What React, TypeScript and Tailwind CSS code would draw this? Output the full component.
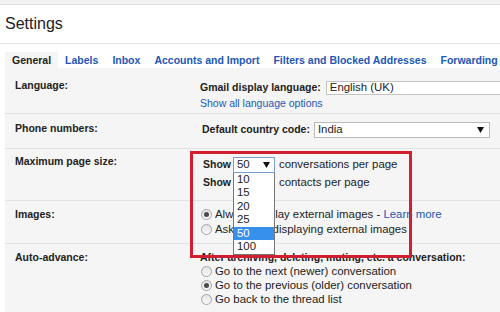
import React from 'react';

const Caret = () => (
  <svg width="7" height="6" viewBox="0 0 7 6" className="shrink-0">
    <polygon points="0,0 7,0 3.5,6" fill="#111" />
  </svg>
);

const Radio = ({ checked = false }: { checked?: boolean }) => (
  <span className="w-[11px] h-[11px] rounded-full border border-[#a5a5a5] bg-gradient-to-b from-[#e4e4e4] to-[#f9f9f9] flex items-center justify-center shrink-0">
    {checked && <span className="w-[5px] h-[5px] rounded-full bg-[#4a4a4a]" />}
  </span>
);

const tabs = ['Labels', 'Inbox', 'Accounts and Import', 'Filters and Blocked Addresses', 'Forwarding'];
const pageSizes = ['10', '15', '20', '25', '50', '100'];

const App: React.FC = () => {
  return (
    <div className="relative w-[500px] h-[312px] overflow-hidden bg-white text-[#222] font-['Liberation_Sans',Arial,sans-serif]">
      <div className="h-[5px] bg-[#f1f1f1] border-b border-[#e3e3e3]" />
      <div className="h-[39px] flex items-center pl-[5px] border-b border-[#e3e3e3]">
        <h1 className="text-[16px] text-[#222]">Settings</h1>
      </div>

      {/* tabs */}
      <div className="flex pl-[5px] pt-[8px] whitespace-nowrap">
        <div className="px-[7px] leading-[16px] text-[10.5px] font-bold bg-[#f5f5f5] text-[#222]">General</div>
        {tabs.map(t => (
          <div key={t} className="px-[7px] leading-[16px] text-[10.5px] font-bold text-[#2257b6]">{t}</div>
        ))}
      </div>

      <div className="ml-[5px] bg-[#f5f5f5] h-[260px]">
        {/* Language */}
        <div className="grid grid-cols-[185px_1fr] pl-[10px] h-[46px] border-b border-[#e2e2e2] pt-[11px]">
          <div className="text-[10.5px] font-bold leading-[13px]">Language:</div>
          <div className="mt-[1px]">
            <div className="flex items-center gap-[5px] whitespace-nowrap">
              <span className="text-[10.5px] font-bold">Gmail display language:</span>
              <div className="h-[14px] w-[200px] bg-white border border-[#c3c3c3] flex items-center pl-[3px] text-[11.4px]">English (UK)</div>
            </div>
            <div className="text-[10.5px] leading-[13px] mt-[1px] text-[#2257b6]">Show all language options</div>
          </div>
        </div>

        {/* Phone numbers */}
        <div className="grid grid-cols-[185px_1fr] pl-[10px] h-[35px] border-b border-[#e2e2e2] pt-[8px]">
          <div className="text-[10.5px] font-bold leading-[13px]">Phone numbers:</div>
          <div className="flex items-center gap-[4px] pl-[2px] h-[15px] whitespace-nowrap">
            <span className="text-[10.5px] font-bold">Default country code:</span>
            <div className="h-[16px] w-[176px] bg-white border border-[#b9b9b9] flex items-center justify-between pl-[3px] pr-[5px] text-[11.4px]">
              <span>India</span>
              <Caret />
            </div>
          </div>
        </div>

        {/* Maximum page size */}
        <div className="grid grid-cols-[185px_1fr] pl-[10px] h-[52px] border-b border-[#e2e2e2] pt-[6px]">
          <div className="text-[10.5px] font-bold leading-[13px]">Maximum page size:</div>
          <div className="mt-[2px] pl-[3px] text-[11.4px] whitespace-nowrap">
            <div className="flex items-center h-[15px]">
              <span className="text-[10.5px] font-bold w-[30px]">Show</span>
              <div className="relative">
                <div className="h-[16px] w-[42px] bg-white border border-[#7b9cc6] flex items-center justify-between pl-[3px] pr-[4px]">
                  <span>50</span>
                  <Caret />
                </div>
                <div className="absolute z-10 left-0 top-full w-[42px] bg-white border border-[#767676] border-t-0">
                  {pageSizes.map(s => (
                    <div
                      key={s}
                      className={`h-[13.5px] leading-[13.5px] pl-[3px] ${s === '50' ? 'bg-[#3790ec] text-white' : ''}`}
                    >
                      {s}
                    </div>
                  ))}
                </div>
              </div>
              <span className="ml-[4px]">conversations per page</span>
            </div>
            <div className="flex items-center mt-[4px] leading-[13px]">
              <span className="text-[10.5px] font-bold w-[76px]">Show</span>
              <span>contacts per page</span>
            </div>
          </div>
        </div>

        {/* Images */}
        <div className="grid grid-cols-[185px_1fr] pl-[10px] h-[43px] border-b border-[#e2e2e2] pt-[6px]">
          <div className="text-[10.5px] font-bold leading-[15px]">Images:</div>
          <div className="pl-[1px] text-[11.4px] leading-[15px] whitespace-nowrap">
            <div className="flex items-center gap-[3px]">
              <Radio checked />
              <span>Always display external images - <span className="text-[#2257b6]">Learn more</span></span>
            </div>
            <div className="flex items-center gap-[3px]">
              <Radio />
              <span>Ask before displaying external images</span>
            </div>
          </div>
        </div>

        {/* Auto-advance */}
        <div className="grid grid-cols-[185px_1fr] pl-[10px] pt-[7px]">
          <div className="text-[10.5px] font-bold leading-[13px]">Auto-advance:</div>
          <div className="whitespace-nowrap">
            <div className="text-[10.5px] font-bold leading-[13px]">After archiving, deleting, muting, etc. a conversation:</div>
            <div className="pl-[1px] text-[11.4px] leading-[14px]">
              <div className="flex items-center gap-[3px]">
                <Radio />
                <span>Go to the next (newer) conversation</span>
              </div>
              <div className="flex items-center gap-[3px]">
                <Radio checked />
                <span>Go to the previous (older) conversation</span>
              </div>
              <div className="flex items-center gap-[3px]">
                <Radio />
                <span>Go back to the thread list</span>
              </div>
            </div>
          </div>
        </div>
      </div>

      {/* highlight annotation */}
      <div className="absolute z-20 left-[190px] top-[151px] w-[222px] h-[107px] border-[3px] border-[#d0202f] pointer-events-none" />
    </div>
  );
};

export default App;
